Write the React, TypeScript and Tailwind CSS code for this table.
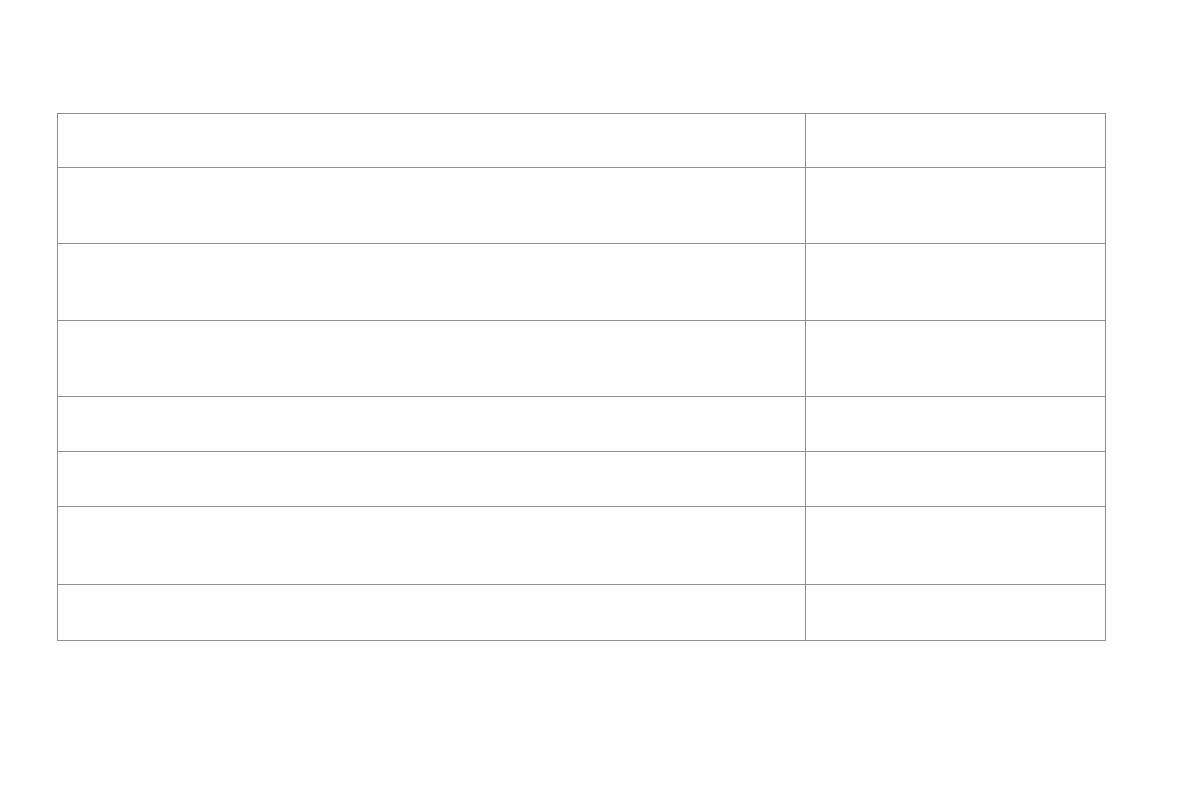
const ROWS = [
  "h-[54px]",
  "h-[76px]",
  "h-[77px]",
  "h-[76px]",
  "h-[55px]",
  "h-[55px]",
  "h-[78px]",
  "h-[56px]",
];

export default function App() {
  return (
    <div className="min-h-[794px] w-[1191px] bg-white pl-[57px] pt-[113px] font-['Liberation_Sans',sans-serif]">
      <div className="grid w-[1049px] grid-cols-[748px_300px] border-l border-t border-[#8f8f8f]">
        {ROWS.map((h, i) => (
          <div key={i} className="contents">
            <div className={`${h} border-b border-r border-[#8f8f8f]`} />
            <div className={`${h} border-b border-r border-[#8f8f8f]`} />
          </div>
        ))}
      </div>
    </div>
  );
}
